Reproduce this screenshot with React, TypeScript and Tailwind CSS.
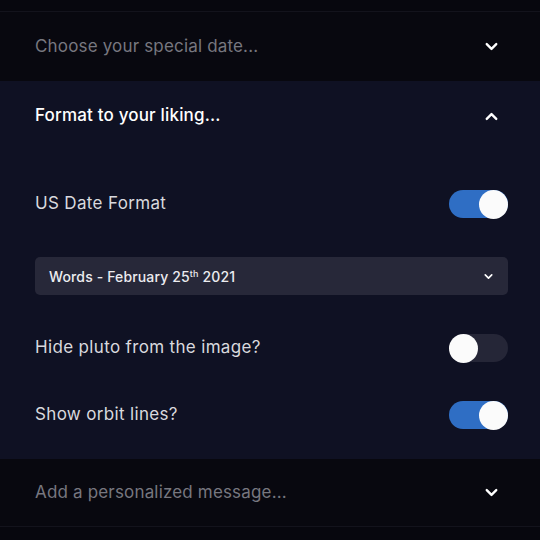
import { ChevronDown, ChevronUp } from "lucide-react";

function Toggle({ on }: { on: boolean }) {
  return (
    <div
      className={`flex h-[28px] w-[59px] items-center rounded-full ${
        on ? "justify-end bg-[#2f6ec4]" : "justify-start bg-[#252637]"
      }`}
    >
      <div className="h-[29px] w-[29px] rounded-full bg-[#fbfbfb]" />
    </div>
  );
}

function Row({ label, on }: { label: string; on: boolean }) {
  return (
    <div className="flex items-center justify-between">
      <span className="text-[17px] tracking-[0.02em] text-[#d9d9de]">{label}</span>
      <Toggle on={on} />
    </div>
  );
}

export default function App() {
  return (
    <div className="flex h-[540px] w-[540px] flex-col bg-[#07070e] font-['Inter',sans-serif]">
      <div className="h-[12px] border-b border-[#13131c]" />
      <div className="flex h-[69px] items-center justify-between bg-[#08080f] pl-[35px] pr-[39px]">
        <span className="text-[17px] tracking-[0.01em] text-[#77777f]">Choose your special date...</span>
        <ChevronDown className="h-[19px] w-[19px] text-white" strokeWidth={3} />
      </div>
      <div className="flex h-[378px] flex-col bg-[#0f1123] pl-[35px] pr-[32px]">
        <div className="flex h-[70px] items-center justify-between pr-[7px]">
          <span className="text-[17px] font-medium tracking-[0.01em] text-white">Format to your liking...</span>
          <ChevronUp className="h-[19px] w-[19px] text-white" strokeWidth={3} />
        </div>
        <div className="mt-[39px] flex flex-col">
          <Row label="US Date Format" on />
          <div className="mt-[39px] flex h-[38px] items-center justify-between rounded-[5px] bg-[#272839] pl-[14px] pr-[13px]">
            <span className="text-[14px] font-medium tracking-[0.01em] text-[#ececf0]">
              Words - February 25<sup className="text-[9px]">th</sup> 2021
            </span>
            <ChevronDown className="h-[13px] w-[13px] text-white" strokeWidth={3} />
          </div>
          <div className="mt-[39px]">
            <Row label="Hide pluto from the image?" on={false} />
          </div>
          <div className="mt-[39px]">
            <Row label="Show orbit lines?" on />
          </div>
        </div>
      </div>
      <div className="flex h-[68px] items-center justify-between border-b border-[#13131c] bg-[#08080f] pl-[35px] pr-[39px]">
        <span className="text-[17px] tracking-[0.01em] text-[#77777f]">Add a personalized message...</span>
        <ChevronDown className="h-[19px] w-[19px] text-white" strokeWidth={3} />
      </div>
    </div>
  );
}
